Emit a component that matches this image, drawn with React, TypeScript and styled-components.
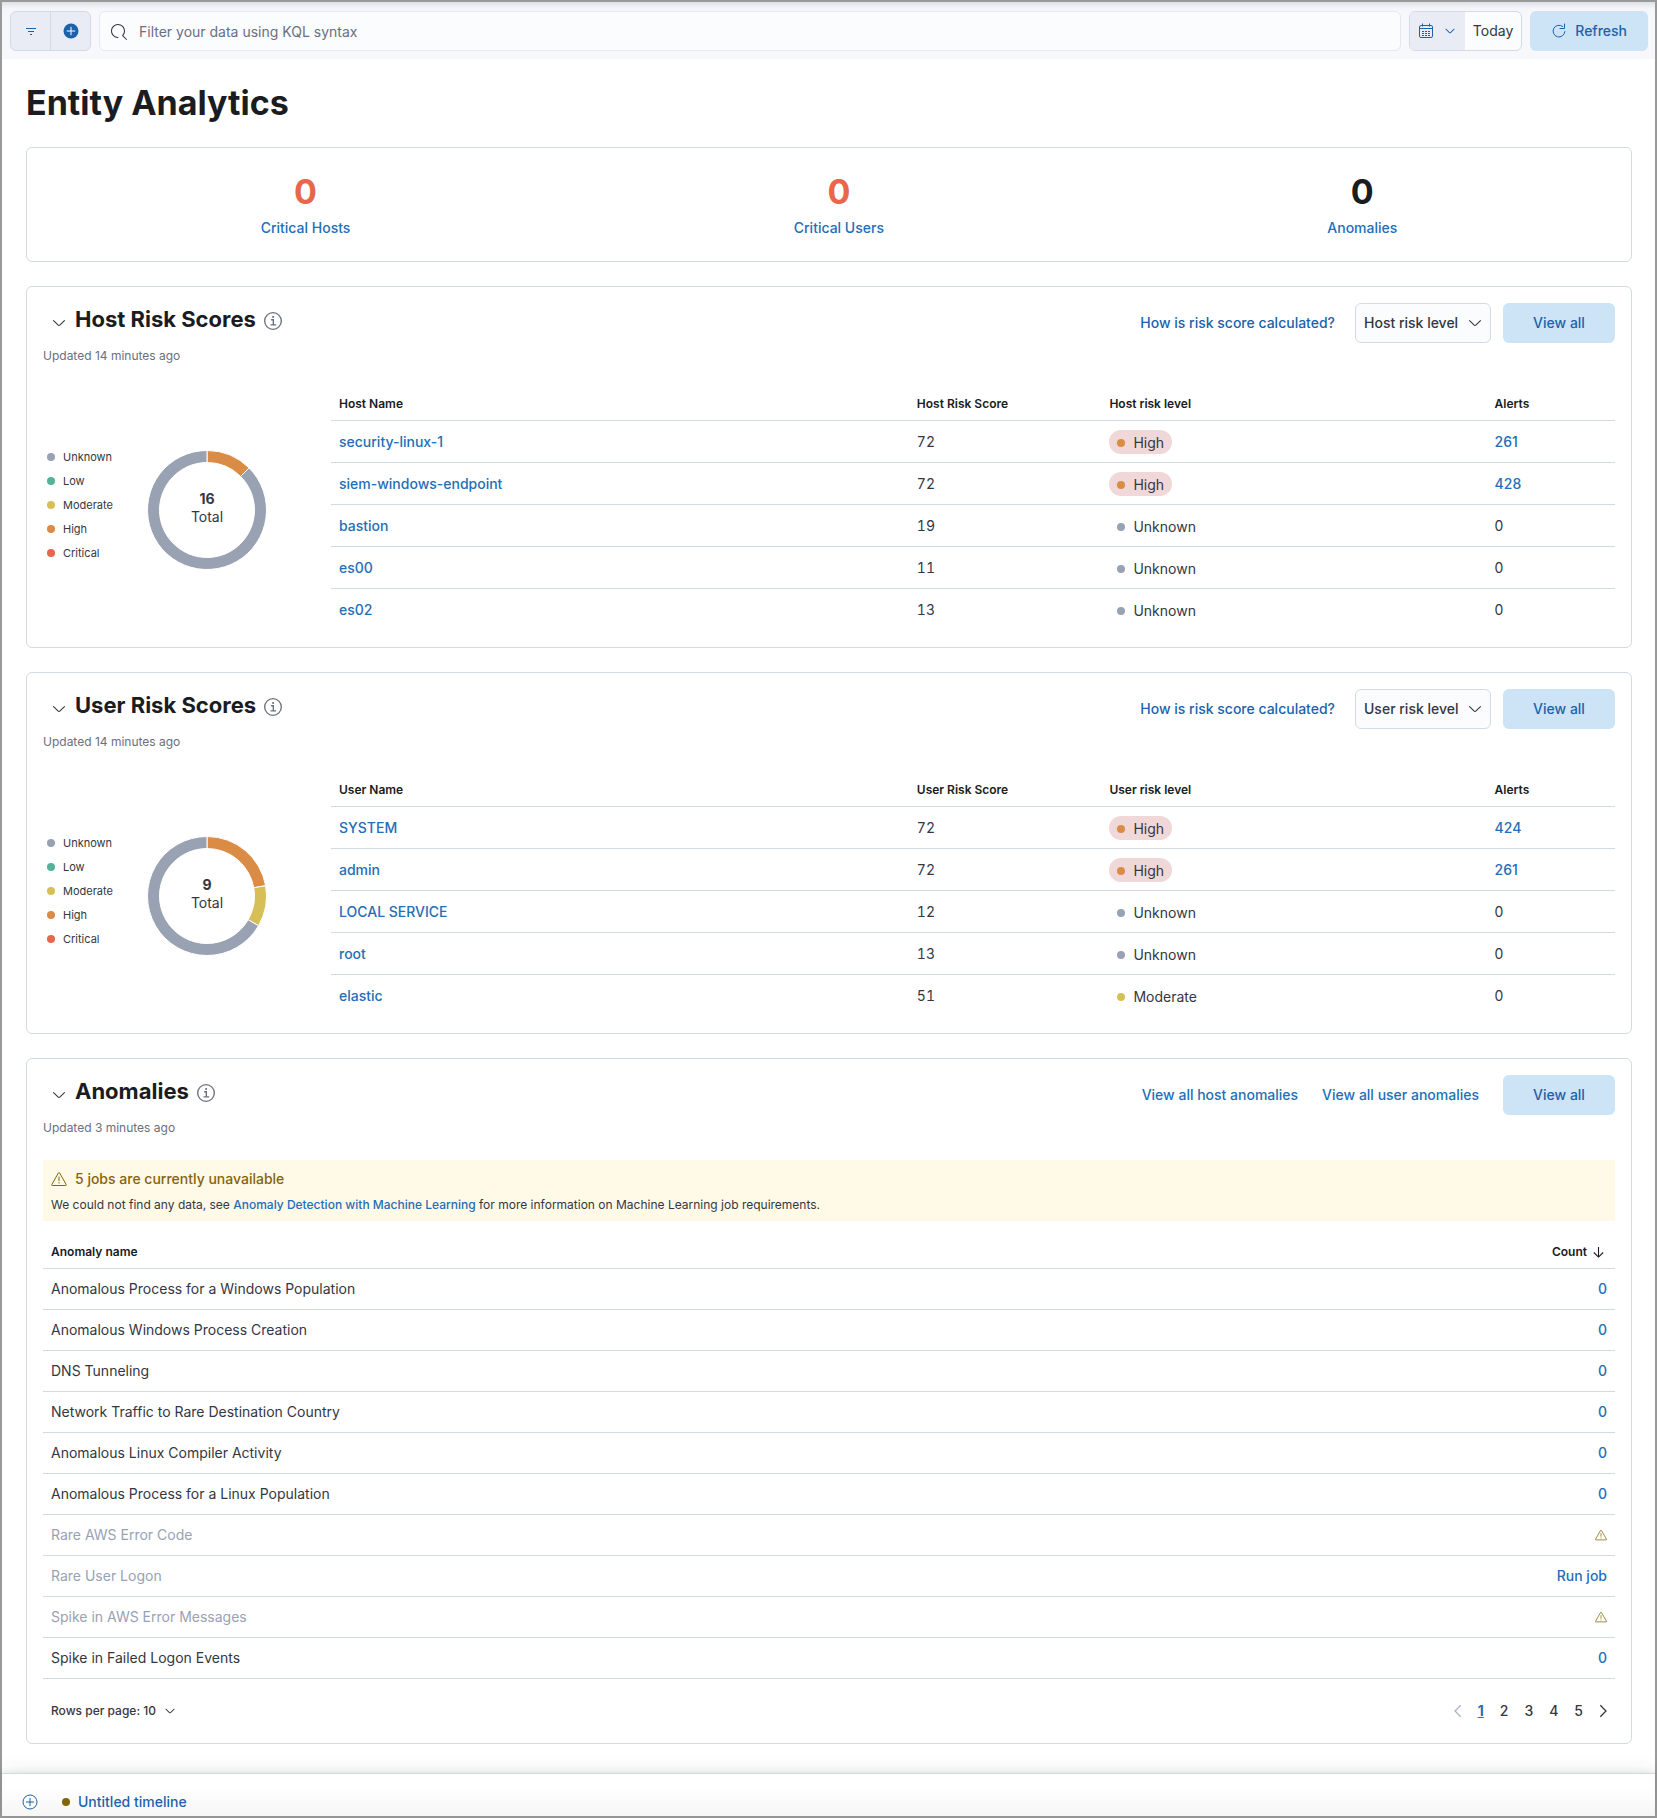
import React from "react";
import styled, { createGlobalStyle, css } from "styled-components";

const color = {
  frame: "#999999",
  border: "#d3dae6",
  title: "#1a1c21",
  text: "#343741",
  subdued: "#69707d",
  disabled: "#98a2b3",
  link: "#236eb9",
  button: "#1d62a9",
  buttonFill: "#cce4f5",
  fill: "#e9ecf4",
  field: "#fbfcfd",
  danger: "#e7664c",
  warning: "#83650a",
};

const riskColors: Record<string, string> = {
  Unknown: "#98a2b3",
  Low: "#54b399",
  Moderate: "#d6bf57",
  High: "#da8b45",
  Critical: "#e7664c",
};

const GlobalStyle = createGlobalStyle`
  *, *::before, *::after { box-sizing: border-box; }
  body {
    margin: 0;
    background: #ffffff;
    color: ${color.text};
    font-family: Inter, "Liberation Sans", sans-serif;
    font-size: 14px;
    line-height: 20px;
  }
  button, input, select { font: inherit; color: inherit; margin: 0; }
  button { border: 0; background: none; padding: 0; cursor: pointer; }
  h1, h2, p, ul, dl, dd { margin: 0; padding: 0; }
  svg { display: block; flex: none; }
`;

/* ---------- icons ---------- */

const Icon = ({ size = 16, children, label }: { size?: number; children: React.ReactNode; label?: string }) => (
  <svg
    width={size}
    height={size}
    viewBox="0 0 16 16"
    fill="currentColor"
    role={label ? "img" : undefined}
    aria-label={label}
    aria-hidden={label ? undefined : true}
  >
    {children}
  </svg>
);

const ArrowDown = ({ size }: { size?: number }) => (
  <Icon size={size}>
    <path d="M13.069 5.157 8.384 9.768a.546.546 0 0 1-.768 0L2.93 5.158a.552.552 0 0 0-.771 0 .53.53 0 0 0 0 .759l4.684 4.61c.641.631 1.672.63 2.312 0l4.684-4.61a.53.53 0 0 0 0-.76.552.552 0 0 0-.771 0z" />
  </Icon>
);

const FilterIcon = () => (
  <Icon>
    <path d="M3 5h10v1H3zM5 8h6v1H5zM7 11h2v1H7z" />
  </Icon>
);

const PlusFilled = () => (
  <Icon>
    <circle cx="8" cy="8" r="7.5" />
    <path d="M8 3.8v8.4M3.8 8h8.4" stroke="#ffffff" strokeWidth="1" />
  </Icon>
);

const PlusCircle = () => (
  <Icon>
    <g fill="none" stroke="currentColor">
      <circle cx="8" cy="8" r="7" />
      <path d="M8 4v8M4 8h8" />
    </g>
  </Icon>
);

const SearchIcon = () => (
  <Icon>
    <path d="M11.271 11.978l3.872 3.873a.502.502 0 0 0 .708 0 .502.502 0 0 0 0-.708l-3.565-3.564c2.38-2.747 2.267-6.923-.342-9.532-2.73-2.73-7.17-2.73-9.898 0-2.728 2.729-2.728 7.17 0 9.9a6.955 6.955 0 0 0 4.949 2.05.5.5 0 0 0 0-1 5.96 5.96 0 0 1-4.242-1.757 6.01 6.01 0 0 1 0-8.486 6.004 6.004 0 0 1 8.484 0 6.01 6.01 0 0 1 0 8.486.5.5 0 0 0 .034.738z" />
  </Icon>
);

const CalendarIcon = () => (
  <Icon>
    <g fill="none" stroke="currentColor">
      <rect x="1.5" y="2.5" width="13" height="12" rx="1.5" />
      <path d="M1.5 5.5h13M4.5.5v3M11.5.5v3" />
      <path d="M4 8.5h8M4 10.5h8M4 12.5h8" strokeDasharray="2 1" />
    </g>
  </Icon>
);

const RefreshIcon = () => (
  <Icon>
    <g fill="none" stroke="currentColor">
      <path d="M11.6 3.4A5.9 5.9 0 1 0 13.9 8.6" strokeLinecap="round" />
      <path d="M13.5 1v4.5H9" strokeLinecap="round" />
    </g>
  </Icon>
);

const InfoIcon = () => (
  <Icon size={18} label="More information">
    <circle cx="8" cy="8" r="7.4" fill="none" stroke="currentColor" strokeWidth="1.2" />
    <circle cx="8.1" cy="4.4" r=".95" />
    <path d="M6.3 6.9h2v4.5M5.8 11.5h5" fill="none" stroke="currentColor" strokeWidth="1.2" />
  </Icon>
);

const WarningIcon = ({ size, label }: { size?: number; label?: string }) => (
  <Icon size={size} label={label}>
    <g fill="none" stroke="currentColor">
      <path d="M7.4 1.9.8 13.6a.6.6 0 0 0 .5.9h13.4a.6.6 0 0 0 .5-.9L8.6 1.9a.7.7 0 0 0-1.2 0z" />
      <path d="M8 5.5v4.6M8 11.2v1.3" />
    </g>
  </Icon>
);

const SortDown = () => (
  <Icon>
    <path d="M7.5 3v10M2.8 8.5l4.7 4.6 4.7-4.6" fill="none" stroke="currentColor" strokeWidth="1.1" />
  </Icon>
);

const PageArrow = ({ direction }: { direction: "left" | "right" }) => (
  <Icon>
    <path
      d={direction === "left" ? "M10.7 2.2 5 8l5.7 5.8" : "M5.3 2.2 11 8l-5.7 5.8"}
      fill="none"
      stroke="currentColor"
      strokeWidth="1.3"
    />
  </Icon>
);

/* ---------- shared parts ---------- */

const Link = styled.a<{ $strong?: boolean }>`
  color: ${(p) => (p.$strong ? color.button : color.link)};
  font-weight: 500;
  text-decoration: none;
  &:hover { text-decoration: underline; }
`;

const FilledButton = styled.button`
  display: inline-flex;
  align-items: center;
  justify-content: center;
  gap: 8px;
  height: 40px;
  min-width: 112px;
  padding: 0 21px;
  border-radius: 6px;
  background: ${color.buttonFill};
  color: ${color.button};
  font-weight: 500;
`;

const Dot = styled.span<{ $color: string }>`
  flex: none;
  width: 8px;
  height: 8px;
  border-radius: 50%;
  background: ${(p) => p.$color};
`;

const Panel = styled.section`
  border: 1px solid ${color.border};
  border-radius: 6px;
  padding: 16px;
  background: #ffffff;
`;

/* ---------- page frame ---------- */

const Frame = styled.div`
  display: flex;
  flex-direction: column;
  min-height: 100vh;
  border: 2px solid ${color.frame};
`;

const TopBar = styled.header`
  display: flex;
  gap: 8px;
  padding: 9px 7px 8px 8px;
  background: linear-gradient(#dfe1e8, #f4f5f9 6px, #f7f8fc 12px);
`;

const ButtonGroup = styled.div`
  display: flex;
  border: 1px solid ${color.border};
  border-radius: 6px;
  background: ${color.fill};
  color: ${color.button};
`;

const GroupButton = styled.button`
  display: flex;
  align-items: center;
  justify-content: center;
  width: 39px;
  height: 38px;
  & + & {
    width: 40px;
    border-left: 1px solid ${color.border};
  }
`;

const SearchField = styled.label`
  flex: 1;
  display: flex;
  align-items: center;
  gap: 12px;
  min-width: 0;
  height: 40px;
  padding: 2px 11px 0;
  border: 1px solid #e3e8f1;
  border-radius: 6px;
  background: ${color.field};
`;

const SearchInput = styled.input`
  flex: 1;
  min-width: 0;
  border: 0;
  padding: 0;
  background: transparent;
  outline: none;
  &::placeholder { color: ${color.subdued}; opacity: 1; }
`;

const DatePicker = styled.div`
  display: flex;
  overflow: hidden;
  height: 40px;
  border: 1px solid ${color.border};
  border-radius: 6px;
  background: ${color.field};
`;

const QuickSelect = styled.button`
  display: flex;
  align-items: center;
  gap: 10px;
  padding: 0 9px 0 8px;
  background: ${color.fill};
  color: ${color.button};
`;

const DateButton = styled.button`
  padding: 0 8px;
`;

const Main = styled.main`
  flex: 1;
  display: flex;
  flex-direction: column;
  gap: 24px;
  padding: 24px 23px 29px 24px;
`;

const PageTitle = styled.h1`
  color: ${color.title};
  font-size: 34px;
  line-height: 40px;
  font-weight: 700;
`;

/* ---------- summary ---------- */

const Summary = styled(Panel)`
  display: flex;
  justify-content: space-around;
  padding: 24px 12px 21px;
`;

const Stat = styled.div`
  display: flex;
  flex-direction: column;
  align-items: center;
  gap: 4px;
  line-height: 24px;
`;

const StatValue = styled.span<{ $critical?: boolean }>`
  color: ${(p) => (p.$critical ? color.danger : color.title)};
  font-size: 34px;
  line-height: 40px;
  font-weight: 700;
`;

/* ---------- section header ---------- */

const SectionHeader = styled.div`
  display: flex;
  justify-content: space-between;
  height: 40px;
`;

const TitleGroup = styled.div`
  display: flex;
  align-items: flex-start;
`;

const Toggle = styled.button`
  display: flex;
  align-items: center;
  justify-content: center;
  width: 32px;
  height: 40px;
`;

const SectionTitle = styled.h2`
  color: ${color.title};
  font-size: 22px;
  line-height: 32px;
  font-weight: 700;
`;

const InfoMark = styled.span`
  display: flex;
  align-items: center;
  height: 36px;
  margin-left: 8px;
  color: ${color.subdued};
`;

const Updated = styled.p`
  color: ${color.subdued};
  font-size: 12px;
  line-height: 26px;
`;

const Actions = styled.div<{ $gap: number }>`
  display: flex;
  align-items: center;
  gap: ${(p) => p.$gap}px;
`;

const Controls = styled.div`
  display: flex;
  gap: 12px;
`;

const SelectBox = styled.span<{ $bare?: boolean }>`
  display: inline-grid;
  align-items: center;
  & > * { grid-area: 1 / 1; }
  & > svg {
    justify-self: end;
    pointer-events: none;
    margin-right: ${(p) => (p.$bare ? 0 : 8)}px;
  }
`;

const Select = styled.select<{ $bare?: boolean }>`
  appearance: none;
  outline: none;
  font-weight: 500;
  ${(p) =>
    p.$bare
      ? css`
          height: 24px;
          padding: 0 20px 0 0;
          border: 0;
          background: transparent;
          font-size: 12px;
        `
      : css`
          height: 40px;
          padding: 0 31px 0 8px;
          border: 1px solid ${color.border};
          border-radius: 6px;
          background: ${color.field};
        `}
`;

const SectionBody = styled.div`
  margin-top: 19px;
`;

/* ---------- risk panels ---------- */

const RiskLayout = styled(SectionBody)`
  display: grid;
  grid-template-columns: 272px minmax(0, 1fr);
  gap: 16px;
`;

const ChartArea = styled.div`
  display: flex;
  align-items: center;
  gap: 36px;
  padding-left: 4px;
`;

const Legend = styled.ul`
  width: 64px;
  padding-bottom: 10px;
  list-style: none;
  font-size: 11px;
  line-height: 24px;
`;

const LegendItem = styled.li`
  display: flex;
  align-items: center;
  gap: 8px;
`;

const Chart = styled.div`
  display: grid;
  place-items: center;
  & > * { grid-area: 1 / 1; }
`;

const ChartLabel = styled.div`
  display: flex;
  flex-direction: column;
  align-items: center;
  padding-bottom: 4px;
  line-height: 18px;
`;

const Table = styled.table`
  width: 100%;
  table-layout: fixed;
  border-collapse: separate;
  border-spacing: 0;
`;

const Th = styled.th<{ $width?: string; $right?: boolean }>`
  width: ${(p) => p.$width ?? "auto"};
  height: 33px;
  padding: 0 8px;
  border-bottom: 1px solid ${color.border};
  color: ${color.title};
  font-size: 12px;
  line-height: 18px;
  font-weight: 600;
  text-align: ${(p) => (p.$right ? "right" : "left")};
`;

const Td = styled.td<{ $tall?: boolean; $right?: boolean; $disabled?: boolean; $tabular?: boolean }>`
  height: ${(p) => (p.$tall ? 42 : 41)}px;
  padding: 0 8px;
  border-bottom: 1px solid ${color.border};
  color: ${(p) => (p.$disabled ? color.disabled : color.text)};
  text-align: ${(p) => (p.$right ? "right" : "left")};
  font-variant-numeric: ${(p) => (p.$tabular ? "tabular-nums" : "normal")};
  ${(p) => p.$tall && css`tr:last-child > & { border-bottom-color: transparent; }`}
`;

const Level = styled.span<{ $highlight: boolean }>`
  display: inline-flex;
  align-items: center;
  gap: 8px;
  height: 24px;
  padding: 2px 8px 0;
  border-radius: 12px;
  vertical-align: middle;
  background: ${(p) => (p.$highlight ? "#f0d8d8" : "transparent")};
`;

/* ---------- anomalies ---------- */

const Callout = styled.div`
  margin-bottom: 15px;
  padding: 9px 8px 7px;
  background: #fff9e8;
`;

const CalloutTitle = styled.p`
  display: flex;
  align-items: center;
  gap: 8px;
  margin-bottom: 7px;
  color: ${color.warning};
  font-weight: 500;
`;

const CalloutText = styled.p`
  font-size: 12px;
  line-height: 18px;
`;

const SortButton = styled.button`
  display: inline-flex;
  align-items: center;
  gap: 4px;
  font-weight: 600;
`;

const RowWarning = styled.span`
  display: flex;
  justify-content: flex-end;
  color: ${color.warning};
`;

const TableFooter = styled.div`
  display: flex;
  align-items: center;
  justify-content: space-between;
  margin: 20px 0 4px;
  padding-left: 8px;
`;

const Pagination = styled.nav`
  display: flex;
  align-items: center;
`;

const PageButton = styled.button<{ $current?: boolean; $icon?: boolean }>`
  height: 24px;
  padding: 0 ${(p) => (p.$icon ? 4 : 8)}px;
  color: ${(p) => (p.$current ? color.link : color.text)};
  font-weight: ${(p) => (p.$current ? 700 : 500)};
  text-decoration: ${(p) => (p.$current ? "underline" : "none")};
  &:disabled { color: #abb4c4; }
`;

/* ---------- timeline bar ---------- */

const TimelineBar = styled.footer`
  display: flex;
  align-items: center;
  padding: 16px 20px 2px;
  border-top: 1px solid ${color.border};
  background: linear-gradient(#ffffff, #ffffff 30%, #f6f6f6);
  box-shadow: 0 -2px 6px rgba(0, 0, 0, 0.07), 0 -6px 20px rgba(0, 0, 0, 0.05);
  color: ${color.button};
  line-height: 24px;
`;

const TimelineTitle = styled.div`
  display: flex;
  align-items: center;
  gap: 8px;
  margin-left: 24px;
`;

/* ---------- donut ---------- */

type Slice = { level: string; value: number };

const arcPath = (from: number, to: number, outer: number, inner: number) => {
  const point = (r: number, t: number) =>
    `${60 + r * Math.sin(t * 2 * Math.PI)} ${60 - r * Math.cos(t * 2 * Math.PI)}`;
  const large = to - from > 0.5 ? 1 : 0;
  return `M${point(outer, from)}A${outer} ${outer} 0 ${large} 1 ${point(outer, to)}L${point(inner, to)}A${inner} ${inner} 0 ${large} 0 ${point(inner, from)}Z`;
};

const Donut = ({ slices }: { slices: Slice[] }) => {
  const total = slices.reduce((sum, s) => sum + s.value, 0);
  let position = 0;
  return (
    <Chart>
      <svg width="120" height="120" viewBox="0 0 120 120" aria-hidden="true">
        {slices.map((s) => {
          const from = position;
          position += s.value / total;
          return (
            <path
              key={s.level}
              d={arcPath(from, position, 59.5, 47.5)}
              fill={riskColors[s.level]}
              stroke="#ffffff"
            />
          );
        })}
      </svg>
      <ChartLabel>
        <strong>{total}</strong>
        <span>Total</span>
      </ChartLabel>
    </Chart>
  );
};

/* ---------- sections ---------- */

const TitleBlock = ({ title }: { title: string }) => (
  <TitleGroup>
    <Toggle aria-label={`Collapse ${title}`} aria-expanded="true">
      <ArrowDown />
    </Toggle>
    <SectionTitle>{title}</SectionTitle>
    <InfoMark>
      <InfoIcon />
    </InfoMark>
  </TitleGroup>
);

type RiskRow = { name: string; score: number; level: string; alerts: number };

const RiskPanel = ({ entity, slices, rows }: { entity: string; slices: Slice[]; rows: RiskRow[] }) => (
  <Panel>
    <SectionHeader>
      <TitleBlock title={`${entity} Risk Scores`} />
      <Actions $gap={20}>
        <Link href="#risk-score" $strong>How is risk score calculated?</Link>
        <Controls>
          <SelectBox>
            <Select aria-label={`${entity} risk level filter`}>
              <option>{entity} risk level</option>
            </Select>
            <ArrowDown />
          </SelectBox>
          <FilledButton>View all</FilledButton>
        </Controls>
      </Actions>
    </SectionHeader>
    <Updated>Updated 14 minutes ago</Updated>
    <RiskLayout>
      <ChartArea>
        <Legend>
          {Object.keys(riskColors).map((level) => (
            <LegendItem key={level}>
              <Dot $color={riskColors[level]} />
              {level}
            </LegendItem>
          ))}
        </Legend>
        <Donut slices={slices} />
      </ChartArea>
      <Table>
        <thead>
          <tr>
            <Th $width="45%">{entity} Name</Th>
            <Th $width="15%">{entity} Risk Score</Th>
            <Th $width="30%">{entity} risk level</Th>
            <Th $width="10%">Alerts</Th>
          </tr>
        </thead>
        <tbody>
          {rows.map((row) => (
            <tr key={row.name}>
              <Td $tall>
                <Link href="#details">{row.name}</Link>
              </Td>
              <Td $tall $tabular>{row.score}</Td>
              <Td $tall>
                <Level $highlight={row.level === "High"}>
                  <Dot $color={riskColors[row.level]} />
                  {row.level}
                </Level>
              </Td>
              <Td $tall>{row.alerts ? <Link href="#alerts">{row.alerts}</Link> : row.alerts}</Td>
            </tr>
          ))}
        </tbody>
      </Table>
    </RiskLayout>
  </Panel>
);

const hostRows: RiskRow[] = [
  { name: "security-linux-1", score: 72, level: "High", alerts: 261 },
  { name: "siem-windows-endpoint", score: 72, level: "High", alerts: 428 },
  { name: "bastion", score: 19, level: "Unknown", alerts: 0 },
  { name: "es00", score: 11, level: "Unknown", alerts: 0 },
  { name: "es02", score: 13, level: "Unknown", alerts: 0 },
];

const userRows: RiskRow[] = [
  { name: "SYSTEM", score: 72, level: "High", alerts: 424 },
  { name: "admin", score: 72, level: "High", alerts: 261 },
  { name: "LOCAL SERVICE", score: 12, level: "Unknown", alerts: 0 },
  { name: "root", score: 13, level: "Unknown", alerts: 0 },
  { name: "elastic", score: 51, level: "Moderate", alerts: 0 },
];

type Anomaly = { name: string; state: "count" | "warning" | "run" };

const anomalies: Anomaly[] = [
  { name: "Anomalous Process for a Windows Population", state: "count" },
  { name: "Anomalous Windows Process Creation", state: "count" },
  { name: "DNS Tunneling", state: "count" },
  { name: "Network Traffic to Rare Destination Country", state: "count" },
  { name: "Anomalous Linux Compiler Activity", state: "count" },
  { name: "Anomalous Process for a Linux Population", state: "count" },
  { name: "Rare AWS Error Code", state: "warning" },
  { name: "Rare User Logon", state: "run" },
  { name: "Spike in AWS Error Messages", state: "warning" },
  { name: "Spike in Failed Logon Events", state: "count" },
];

const AnomalyValue = ({ state }: { state: Anomaly["state"] }) => {
  if (state === "warning") {
    return (
      <RowWarning>
        <WarningIcon size={12} label="Job unavailable" />
      </RowWarning>
    );
  }
  return <Link href="#anomalies">{state === "run" ? "Run job" : "0"}</Link>;
};

const AnomaliesPanel = () => (
  <Panel>
    <SectionHeader>
      <TitleBlock title="Anomalies" />
      <Actions $gap={24}>
        <Link href="#host-anomalies">View all host anomalies</Link>
        <Link href="#user-anomalies">View all user anomalies</Link>
        <FilledButton>View all</FilledButton>
      </Actions>
    </SectionHeader>
    <Updated>Updated 3 minutes ago</Updated>
    <SectionBody>
      <Callout>
        <CalloutTitle>
          <WarningIcon />
          5 jobs are currently unavailable
        </CalloutTitle>
        <CalloutText>
          We could not find any data, see <Link href="#ml-docs">Anomaly Detection with Machine Learning</Link> for
          more information on Machine Learning job requirements.
        </CalloutText>
      </Callout>
      <Table>
        <thead>
          <tr>
            <Th>Anomaly name</Th>
            <Th $width="15%" $right aria-sort="descending">
              <SortButton>
                Count
                <SortDown />
              </SortButton>
            </Th>
          </tr>
        </thead>
        <tbody>
          {anomalies.map((row) => (
            <tr key={row.name}>
              <Td $disabled={row.state !== "count"}>{row.name}</Td>
              <Td $right>
                <AnomalyValue state={row.state} />
              </Td>
            </tr>
          ))}
        </tbody>
      </Table>
      <TableFooter>
        <SelectBox $bare>
          <Select $bare aria-label="Rows per page">
            <option>Rows per page: 10</option>
          </Select>
          <ArrowDown size={12} />
        </SelectBox>
        <Pagination aria-label="Pagination">
          <PageButton $icon disabled aria-label="Previous page">
            <PageArrow direction="left" />
          </PageButton>
          {[1, 2, 3, 4, 5].map((n) => (
            <PageButton key={n} $current={n === 1} aria-current={n === 1 ? "page" : undefined}>
              {n}
            </PageButton>
          ))}
          <PageButton $icon aria-label="Next page">
            <PageArrow direction="right" />
          </PageButton>
        </Pagination>
      </TableFooter>
    </SectionBody>
  </Panel>
);

export default function App() {
  return (
    <>
      <GlobalStyle />
      <Frame>
        <TopBar>
          <ButtonGroup>
            <GroupButton aria-label="Saved query menu">
              <FilterIcon />
            </GroupButton>
            <GroupButton aria-label="Add filter">
              <PlusFilled />
            </GroupButton>
          </ButtonGroup>
          <SearchField>
            <SearchIcon />
            <SearchInput
              type="text"
              aria-label="Filter your data using KQL syntax"
              placeholder="Filter your data using KQL syntax"
            />
          </SearchField>
          <DatePicker>
            <QuickSelect aria-label="Date quick select">
              <CalendarIcon />
              <ArrowDown size={12} />
            </QuickSelect>
            <DateButton>Today</DateButton>
          </DatePicker>
          <FilledButton>
            <RefreshIcon />
            Refresh
          </FilledButton>
        </TopBar>
        <Main>
          <PageTitle>Entity Analytics</PageTitle>
          <Summary>
            <Stat>
              <StatValue $critical>0</StatValue>
              <Link href="#critical-hosts">Critical Hosts</Link>
            </Stat>
            <Stat>
              <StatValue $critical>0</StatValue>
              <Link href="#critical-users">Critical Users</Link>
            </Stat>
            <Stat>
              <StatValue>0</StatValue>
              <Link href="#anomalies">Anomalies</Link>
            </Stat>
          </Summary>
          <RiskPanel
            entity="Host"
            slices={[
              { level: "High", value: 2 },
              { level: "Unknown", value: 14 },
            ]}
            rows={hostRows}
          />
          <RiskPanel
            entity="User"
            slices={[
              { level: "High", value: 2 },
              { level: "Moderate", value: 1 },
              { level: "Unknown", value: 6 },
            ]}
            rows={userRows}
          />
          <AnomaliesPanel />
        </Main>
        <TimelineBar>
          <PlusCircle />
          <TimelineTitle>
            <Dot $color={color.warning} />
            <Link href="#timeline" $strong>Untitled timeline</Link>
          </TimelineTitle>
        </TimelineBar>
      </Frame>
    </>
  );
}
